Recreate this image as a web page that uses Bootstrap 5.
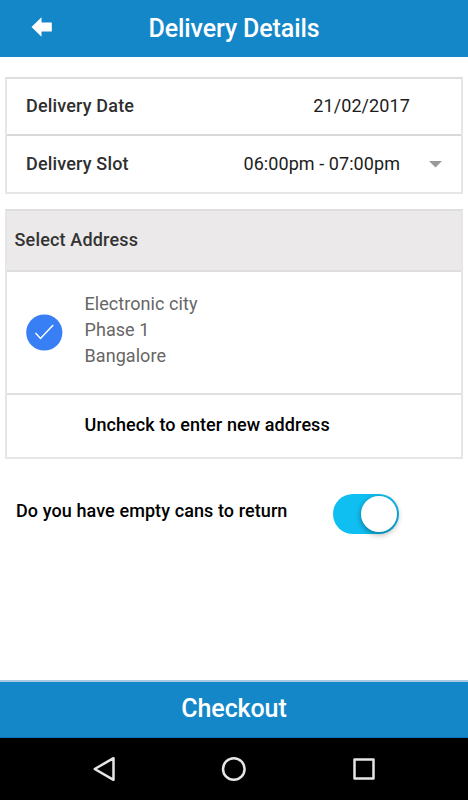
<!DOCTYPE html>
<html lang="en">
<head>
<meta charset="utf-8">
<meta name="viewport" content="width=device-width, initial-scale=1">
<title>Delivery Details</title>
<link href="https://cdn.jsdelivr.net/npm/bootstrap@5.3.0/dist/css/bootstrap.min.css" rel="stylesheet">
<style>
body{font-family:Roboto,"Liberation Sans",sans-serif;font-size:18px;line-height:26px;color:#000;height:800px;overflow:hidden}
.app-bar{background:#1487c9;height:57px;font-size:25px;font-weight:500;letter-spacing:-.12px;padding-bottom:2px}
.app-bar .back{width:83px;padding-left:31px;padding-bottom:2px}
.app-bar .title{padding-top:2px}
.app-bar .end{width:83px}
.panel{border:2px solid #e6e6e6;border-top-color:#dedede;margin:0 5px}
.details{margin-top:20px;height:117px}
.date-row{height:57px;padding-bottom:2px;border-bottom:2px solid #d9d9d9}
.slot-row{height:56px}
.field{color:#2f2f2f;font-weight:500;padding-left:19px;letter-spacing:.17px}
.date-value,.slot-value{color:#1c1c1c}
.date-value{padding-right:51px;letter-spacing:.1px}
.slot-value{padding-right:20px;letter-spacing:.07px}
.slot-caret{margin:0 19px 0 9px}
.address{margin-top:15px;height:250px}
.address-head{height:61px;background:#ebe9ea;border-bottom:2px solid #dedede;padding:0 0 2px 7.500px;color:#333;font-weight:500;letter-spacing:.17px}
.address-row{height:123px;border-bottom:2px solid #e0e0e0;padding-left:19px;color:#666;letter-spacing:.06px}
.address-row svg{margin-right:21.500px}
.address-lines{padding-bottom:5px}
.new-address{padding-left:77.500px;font-weight:500;height:60px;letter-spacing:.1px}
.returns{padding-left:16px;margin-top:34px;height:41px;font-weight:500;letter-spacing:.09px}
.question{padding-bottom:6px}
.toggle{width:66px;height:40px;border-radius:20px;background:#10bff2;padding:2px;border:0;margin-right:69px}
.knob{width:36px;height:36px;border-radius:50%;background:#fff;box-shadow:0 2px 6px rgba(0,0,0,.4)}
.checkout{height:58px;background:#1487c9;border:0;border-top:2px solid #a9c9e2;border-bottom:1px solid #0872b5;color:#fff;font-size:25px;font-weight:500;letter-spacing:-.1px;padding:0 0 1px}
.system-nav{height:62px;background:#000}
</style>
</head>
<body class="d-flex flex-column bg-white">
<header class="app-bar d-flex align-items-center text-white flex-shrink-0">
  <a href="#" class="back d-flex text-white" aria-label="Back"><svg width="22" height="20" viewBox="0 0 22 20"><path fill="currentColor" d="M.5 10 10.5.3V5.500h10.300v9H10.500v5.200z"/></svg></a>
  <span class="title flex-grow-1 text-center">Delivery Details</span>
  <span class="end"></span>
</header>
<main class="flex-grow-1">
  <section class="panel details">
    <div class="date-row d-flex justify-content-between align-items-center">
      <span class="field">Delivery Date</span><span class="date-value">21/02/2017</span>
    </div>
    <div class="slot-row d-flex align-items-center">
      <span class="field me-auto">Delivery Slot</span><span class="slot-value">06:00pm - 07:00pm</span>
      <svg class="slot-caret" width="13" height="7" viewBox="0 0 13 7"><path fill="#999" d="M0 0h13L6.500 6.500z"/></svg>
    </div>
  </section>
  <section class="panel address">
    <div class="address-head d-flex align-items-center">Select Address</div>
    <div class="address-row d-flex align-items-center">
      <svg width="37" height="37" viewBox="0 0 37 37"><circle cx="18.300" cy="18.500" r="18.100" fill="#387ef5"/><path d="m9.500 19 5 5.500 12.700-13.500" fill="none" stroke="#fff" stroke-width="1.500"/></svg>
      <div class="address-lines">Electronic city<br>Phase 1<br>Bangalore</div>
    </div>
    <div class="new-address d-flex align-items-center">Uncheck to enter new address</div>
  </section>
  <div class="returns d-flex align-items-center">
    <span class="question">Do you have empty cans to return</span>
    <button class="toggle d-flex justify-content-end ms-auto" role="switch" aria-checked="true" aria-label="Return empty cans"><span class="knob"></span></button>
  </div>
</main>
<button class="checkout w-100 flex-shrink-0">Checkout</button>
<nav class="system-nav d-flex align-items-center justify-content-center flex-shrink-0">
  <svg width="300" height="30" viewBox="0 0 300 30" fill="none" stroke="#e6e6e6" stroke-width="2.500" stroke-linejoin="round"><path d="M29.500 4.200v21.600L10.700 15z"/><circle cx="149.800" cy="15" r="10.800"/><path d="M270.500 5.500h19v19h-19z"/></svg>
</nav>
<script src="https://cdn.jsdelivr.net/npm/bootstrap@5.3.0/dist/js/bootstrap.bundle.min.js"></script>
</body>
</html>
